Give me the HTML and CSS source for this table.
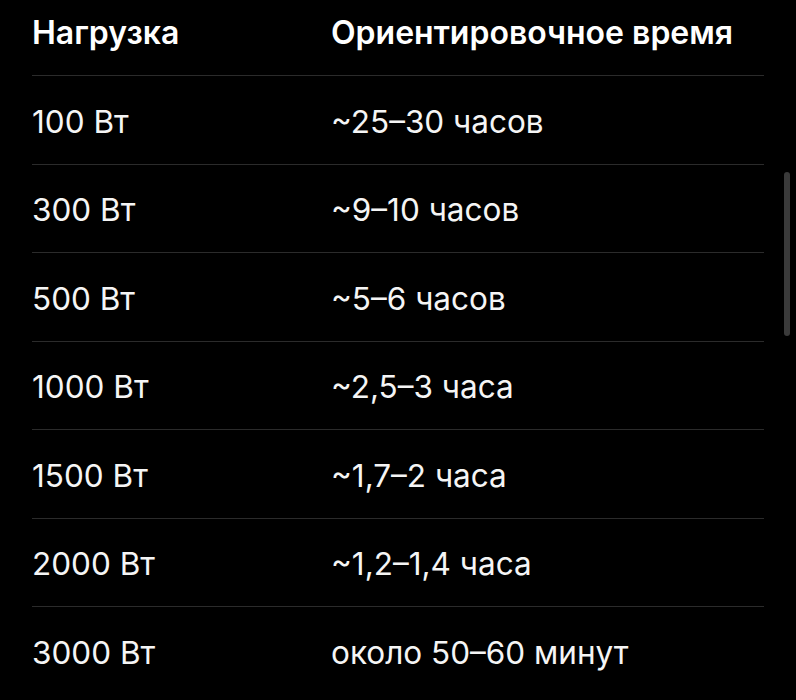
FILE: index.html
```html
<!DOCTYPE html>
<html lang="ru">
<head>
<meta charset="utf-8">
<link rel="stylesheet" href="styles.css">
</head>
<body>
<div class="page">
  <div class="table">
    <div class="row head">
      <div class="c1">Нагрузка</div>
      <div class="c2">Ориентировочное время</div>
    </div>
    <div class="row"><div class="c1">100 Вт</div><div class="c2">~25–30 часов</div></div>
    <div class="row"><div class="c1">300 Вт</div><div class="c2">~9–10 часов</div></div>
    <div class="row"><div class="c1">500 Вт</div><div class="c2">~5–6 часов</div></div>
    <div class="row"><div class="c1">1000 Вт</div><div class="c2">~2,5–3 часа</div></div>
    <div class="row"><div class="c1">1500 Вт</div><div class="c2">~1,7–2 часа</div></div>
    <div class="row"><div class="c1">2000 Вт</div><div class="c2">~1,2–1,4 часа</div></div>
    <div class="row last"><div class="c1">3000 Вт</div><div class="c2">около 50–60 минут</div></div>
  </div>
  <div class="scrollbar"></div>
</div>
</body>
</html>
```
FILE: styles.css
```css
html, body {
  margin: 0;
  padding: 0;
  background: #000;
}
.page {
  position: relative;
  width: 796px;
  height: 700px;
  overflow: hidden;
  background: #000;
  font-family: "Inter", "Liberation Sans", sans-serif;
  color: #f5f5f5;
}
.table {
  margin-left: 32px;
  width: 732px;
  display: flex;
  flex-direction: column;
}
.row {
  display: grid;
  grid-template-columns: 299px 1fr;
  align-items: center;
  height: 87.5px;
  border-bottom: 1px solid #2b2b2b;
  font-size: 31.5px;
  font-weight: 400;
  line-height: 1.2;
}
.row > div {
  padding-top: 4px;
}
.row.head {
  height: 75px;
  align-items: start;
  font-weight: 600;
  font-size: 32px;
  color: #fff;
}
.row.head > div {
  padding-top: 14px;
}
.row.last {
  border-bottom: none;
}
.scrollbar {
  position: absolute;
  left: 784px;
  top: 172px;
  width: 6px;
  height: 164px;
  border-radius: 3px;
  background: #3a3a3a;
}
```
